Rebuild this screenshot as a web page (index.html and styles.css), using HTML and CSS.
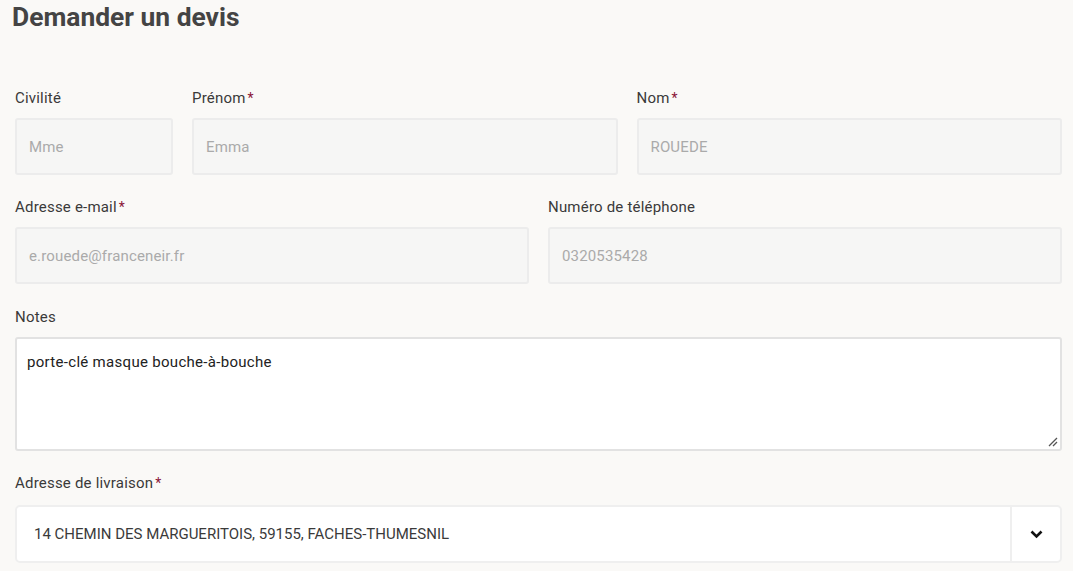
FILE: index.html
```html
<!DOCTYPE html>
<html lang="fr">
<head>
<meta charset="utf-8">
<link rel="stylesheet" href="styles.css">
</head>
<body>
<div class="page">
  <h1 class="title">Demander un devis</h1>
  <form class="form">
    <div class="row row-3">
      <div class="field">
        <label class="label">Civilité</label>
        <div class="input">Mme</div>
      </div>
      <div class="field">
        <label class="label">Prénom<span class="req">*</span></label>
        <div class="input">Emma</div>
      </div>
      <div class="field">
        <label class="label">Nom<span class="req">*</span></label>
        <div class="input">ROUEDE</div>
      </div>
    </div>
    <div class="row row-2">
      <div class="field">
        <label class="label">Adresse e-mail<span class="req">*</span></label>
        <div class="input">e.rouede@franceneir.fr</div>
      </div>
      <div class="field">
        <label class="label">Numéro de téléphone</label>
        <div class="input">0320535428</div>
      </div>
    </div>
    <div class="row">
      <div class="field">
        <label class="label">Notes</label>
        <div class="textarea">porte-clé masque bouche-à-bouche
          <svg class="grip" width="10" height="10" viewBox="0 0 10 10"><path d="M9 1 L1 9 M9 5 L5 9" stroke="#555" stroke-width="1.3" fill="none"/></svg>
        </div>
      </div>
    </div>
    <div class="row row-last">
      <div class="field">
        <label class="label">Adresse de livraison<span class="req">*</span></label>
        <div class="select">
          <div class="select-value">14 CHEMIN DES MARGUERITOIS, 59155, FACHES-THUMESNIL</div>
          <div class="select-btn">
            <svg width="13" height="9" viewBox="0 0 13 9"><path d="M1.5 1.5 L6.5 6.5 L11.5 1.5" stroke="#111" stroke-width="2.6" fill="none"/></svg>
          </div>
        </div>
      </div>
    </div>
  </form>
</div>
</body>
</html>
```
FILE: styles.css
```css
html, body {
  margin: 0;
  padding: 0;
  background: #faf9f7;
}
.page {
  padding: 0 11px 0 15px;
  font-family: Roboto, "Liberation Sans", sans-serif;
  color: #333;
}
.title {
  margin: 0;
  padding-top: 1px;
  margin-left: -3px;
  font-family: Roboto, sans-serif;
  font-weight: 700;
  font-size: 26.4px;
  line-height: 32px;
  color: #444;
}
.form {
  padding-top: 56px;
}
.row {
  display: grid;
  gap: 19px;
  margin-bottom: 23px;
}
.row-3 {
  grid-template-columns: 158px 1fr 1fr;
}
.row-2 {
  grid-template-columns: 1fr 1fr;
  margin-bottom: 24px;
}
.field {
  display: flex;
  flex-direction: column;
}
.label {
  font-size: 15px;
  letter-spacing: 0.2px;
  line-height: 18px;
  color: #3a3a3a;
  margin-bottom: 11px;
}
.row-last .label {
  margin-bottom: 13px;
}
.req {
  color: #8a1538;
  margin-left: 2px;
  font-size: 14px;
}
.input {
  box-sizing: border-box;
  height: 57px;
  border: 2px solid #ececec;
  border-radius: 3px;
  background: #f6f6f5;
  color: #aaa;
  font-size: 15px;
  letter-spacing: 0.15px;
  padding: 0 12px;
  display: flex;
  align-items: center;
}
.textarea {
  position: relative;
  box-sizing: border-box;
  height: 114px;
  border: 2px solid #e2e2e2;
  border-radius: 3px;
  background: #fff;
  color: #222;
  font-size: 15px;
  letter-spacing: 0.3px;
  line-height: 18px;
  padding: 14px 10px;
}
.grip {
  position: absolute;
  right: 2px;
  bottom: 2px;
}
.select {
  box-sizing: border-box;
  height: 58px;
  border: 2px solid #efefef;
  border-radius: 5px;
  background: #fff;
  display: flex;
}
.select-value {
  flex: 1;
  display: flex;
  align-items: center;
  padding-left: 17px;
  font-size: 15px;
  color: #3a3a3a;
}
.select-btn {
  width: 48px;
  border-left: 2px solid #efefef;
  display: flex;
  align-items: center;
  justify-content: center;
}
```
